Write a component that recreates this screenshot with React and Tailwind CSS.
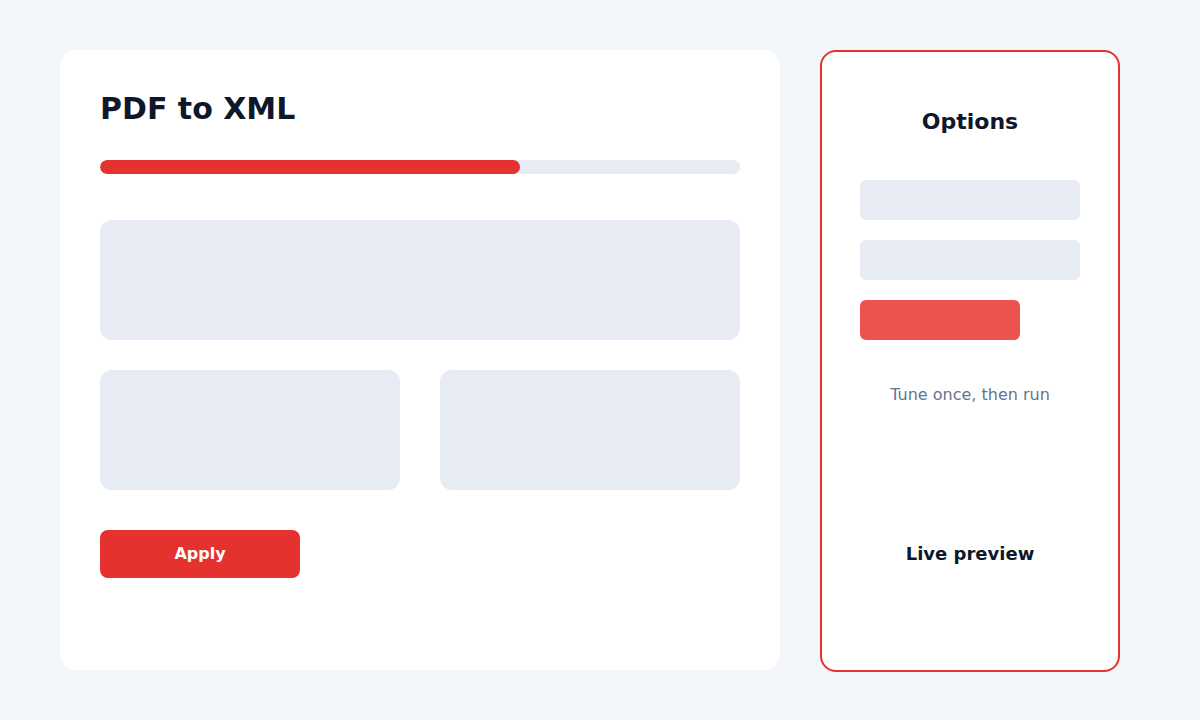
export default function App() {
  const progress = 65.6;

  return (
    <div
      className="flex h-[720px] w-[1200px] items-start gap-10 bg-[#f3f6fb] px-[60px] pt-[50px]"
      style={{ fontFamily: '"DejaVu Sans", Verdana, sans-serif' }}
    >
      {/* main converter card */}
      <section className="flex h-[620px] w-[720px] flex-col rounded-2xl bg-white px-10 pt-10">
        <h1 className="text-[30px] font-bold leading-[38px] text-[#0f172a]">PDF to XML</h1>

        <div className="mt-[32px] h-[14px] w-full overflow-hidden rounded-full bg-[#e6ebf4]">
          <div className="h-full rounded-full bg-[#e5322e]" style={{ width: `${progress}%` }} />
        </div>

        <div className="mt-[46px] h-[120px] rounded-xl bg-[#e6ebf4]" />

        <div className="mt-[30px] grid grid-cols-2 gap-10">
          <div className="h-[120px] rounded-xl bg-[#e6ebf4]" />
          <div className="h-[120px] rounded-xl bg-[#e6ebf4]" />
        </div>

        <button className="mt-10 h-12 w-[200px] rounded-lg bg-[#e5322e] text-base font-bold text-white">
          Apply
        </button>
      </section>

      {/* options side panel */}
      <aside className="flex h-[622px] w-[300px] flex-col items-center rounded-2xl border-2 border-[#e5322e] bg-white px-[38px]">
        <h2 className="mt-[56px] text-[22px] font-bold leading-7 text-[#0f172a]">Options</h2>

        <div className="mt-[44px] flex w-full flex-col gap-5">
          <div className="h-10 rounded-md bg-[#e6ebf4]" />
          <div className="h-10 rounded-md bg-[#e6ebf4]" />
          <div className="h-10 w-[160px] rounded-md bg-[#ea534e]" />
        </div>

        <p className="mt-[43px] text-base leading-6 text-[#64748b]">Tune once, then run</p>

        <p className="mt-[133px] text-lg font-bold leading-7 text-[#0f172a]">Live preview</p>
      </aside>
    </div>
  );
}
